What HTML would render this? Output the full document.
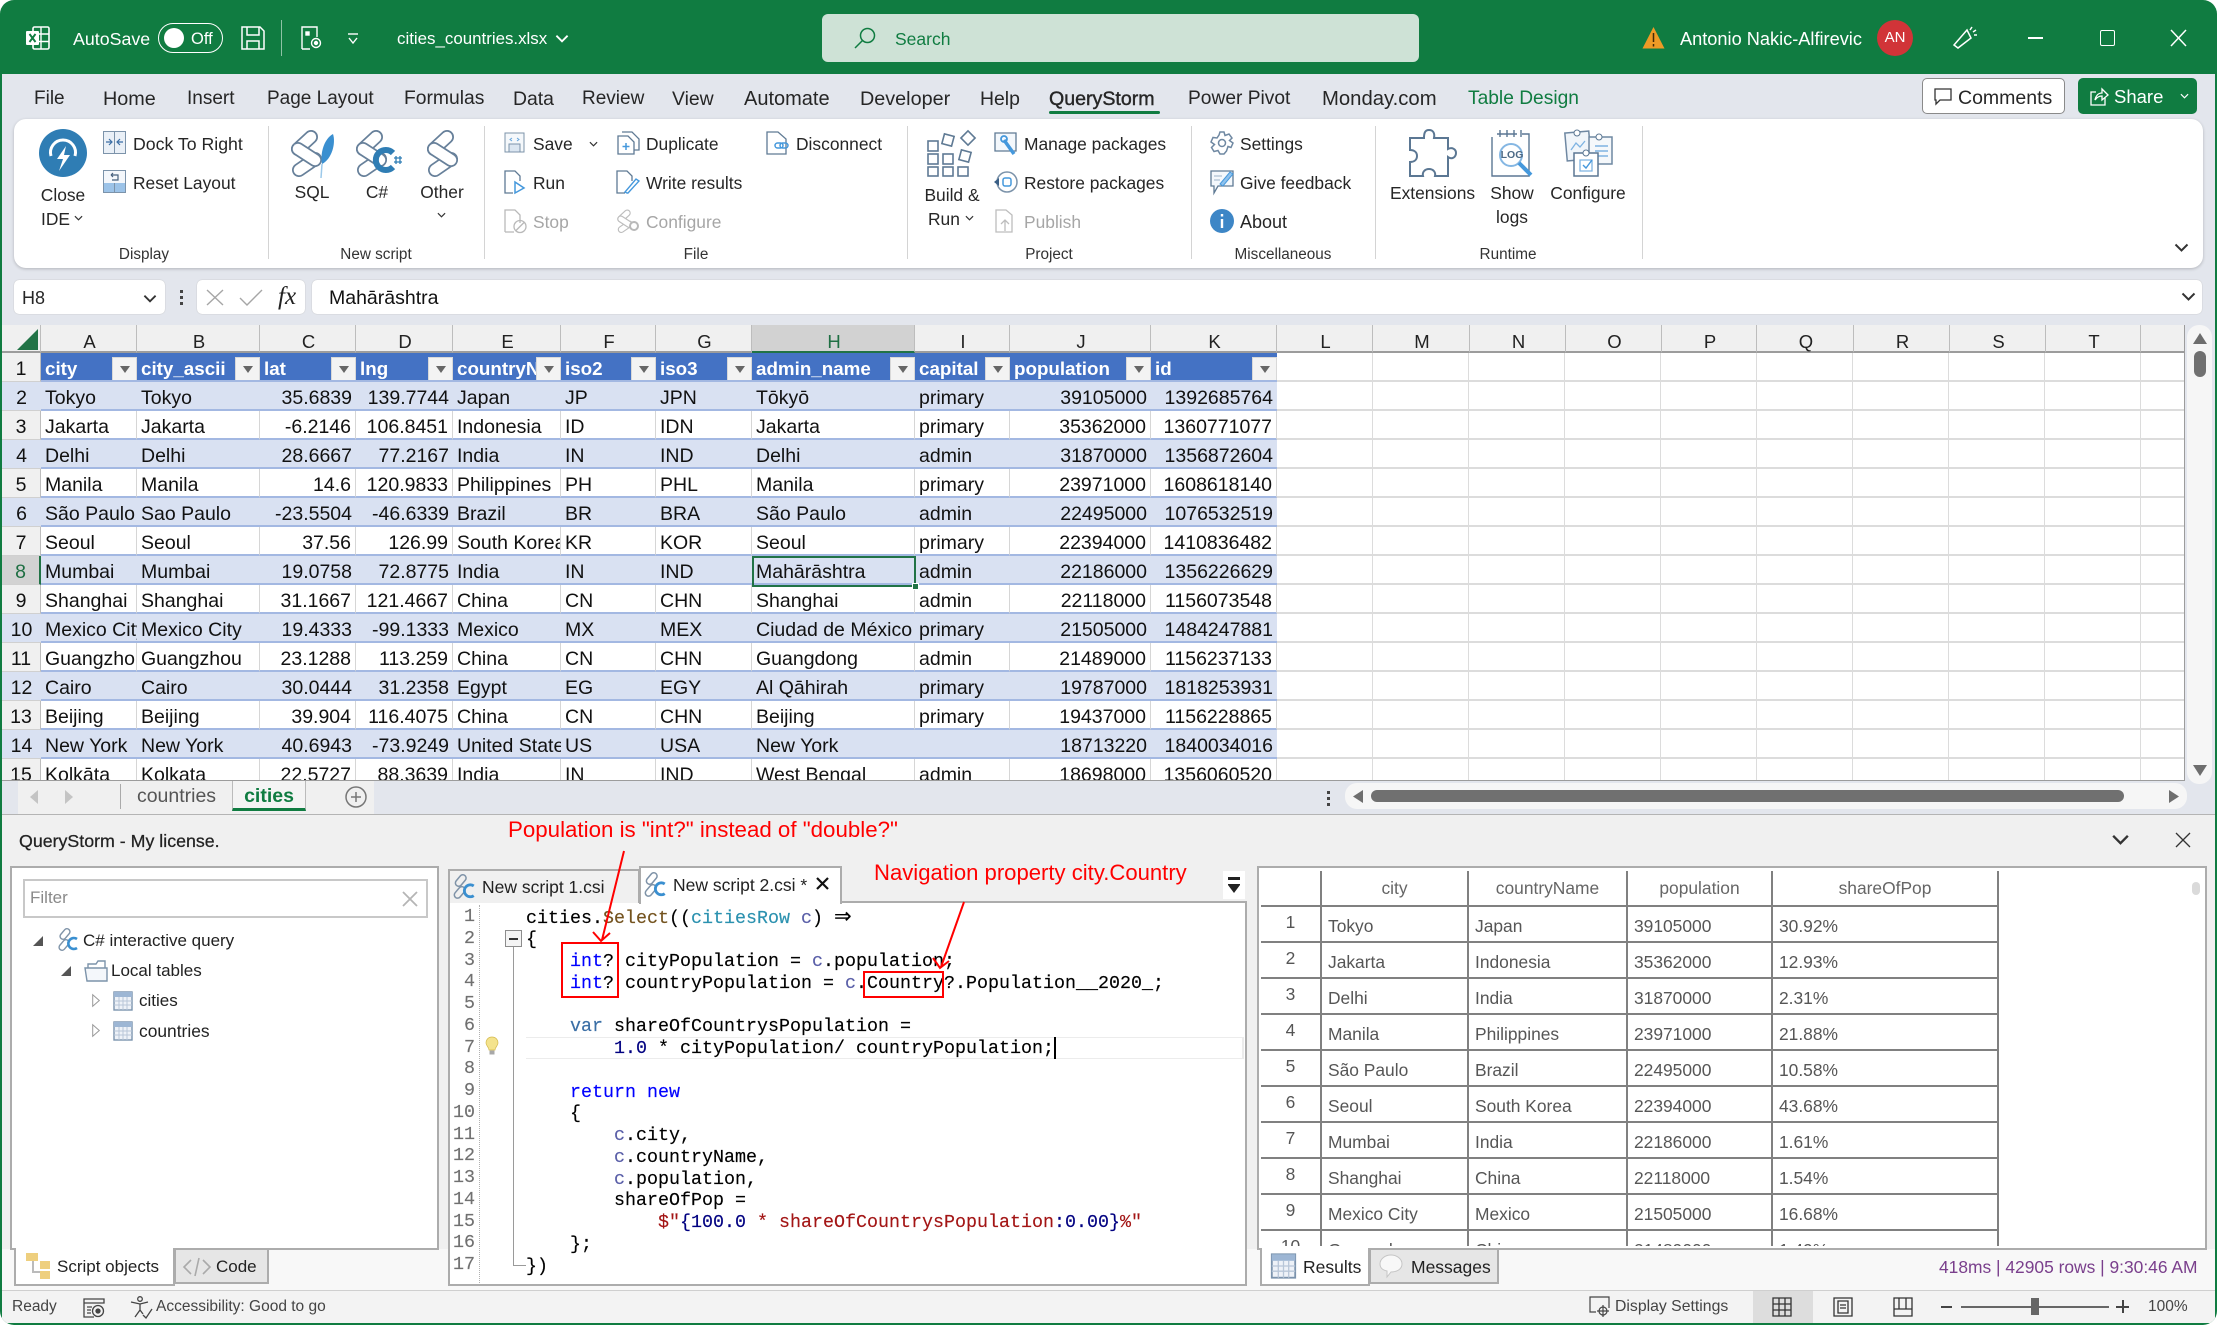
<!DOCTYPE html>
<html lang="en"><head><meta charset="utf-8"><title>cities_countries.xlsx</title>
<style>
html,body{margin:0;padding:0;background:#fff}
body{width:2217px;height:1325px;overflow:hidden;position:relative;font-family:"Liberation Sans",sans-serif;color:#262626}
*{box-sizing:border-box}
#win{position:absolute;left:0;top:0;width:2217px;height:1325px;background:#107C41;border-radius:14px;overflow:hidden}
.a{position:absolute}
.t{position:absolute;white-space:nowrap;line-height:24px;height:24px}
.w{color:#fff}
.tab{font-size:19px;top:87px}
.r{font-size:17.4px}
.d{color:#a6a6a6}
.g{position:absolute;height:24px;line-height:24px;white-space:nowrap;font-size:15.3px;top:243px;color:#333;width:160px;text-align:center}
.c{text-align:center}
.sp{position:absolute;width:1px;top:126px;height:133px;background:#d4d4d4}
svg{position:absolute;overflow:visible}
#hd{position:absolute;left:2px;top:325px;height:28px;display:flex;font-size:18.5px;color:#222}
#hd div{height:28px;line-height:33px;text-align:center;background:#f0f0f0;border-right:1px solid #bdbdbd;border-bottom:2px solid #9c9c9c;flex:none;padding-left:2px}
table{border-collapse:separate;border-spacing:0;table-layout:fixed;position:absolute}
#g td{height:29px;padding:5px 3px 0 4px;line-height:22px;font-size:19.5px;color:#111;white-space:nowrap;overflow:hidden;border-bottom:2px solid #a3b8e2;border-right:1px solid #d6d6d6;background:#fff}
#g tr.b td{background:#d9e1f2;border-right:0}
#g td.n{text-align:center;background:#f0f0f0;border-right:1px solid #bdbdbd;border-bottom:1px solid #d0d0d0;padding:5px 0 0 0;line-height:23px}
#g td.u{text-align:right;padding-right:4px}
#g tr.h td{background:#4472c4;color:#fff;font-weight:bold;font-size:18.8px;position:relative;border:0;border-bottom:2px solid #a3b8e2}
#g tr.h td.n{background:#f0f0f0;color:#111;font-weight:normal;font-size:19.5px;border-right:1px solid #bdbdbd;border-bottom:1px solid #d0d0d0}
#g i{position:absolute;right:0;top:4px;width:25px;height:24px;background:#f3f3f3;border:1px solid #d8d8d8}
#g i:after{content:"";position:absolute;left:7px;top:8px;border:5px solid transparent;border-top:7px solid #666;border-bottom:0}
#rs td{height:36px;border-bottom:2px solid #808080;border-right:2px solid #808080;padding:4px 0 0 6px;font-size:17.4px;color:#565656;white-space:nowrap;overflow:hidden;line-height:28px}
#rs td.n{text-align:center;padding:0 0 4px 0;color:#555}
#rs tr.h td{height:35px;text-align:center;padding:0;line-height:34px;color:#666}
pre{position:absolute;margin:0;font-family:"Liberation Mono",monospace;font-size:18.33px;line-height:21.75px;color:#000;-webkit-text-stroke:.15px currentColor}
.b1{color:#00f}.nv{color:#000080}.pm{color:#5a5fa8}.ty{color:#2b91af}.st{color:#a31515}.br{color:#74531f}.vr{color:#3a6ea5}
.tr{font-size:17px;color:#222}
.st2{font-size:15.5px;color:#444}
</style></head>
<body>
<svg width="0" height="0" style="position:absolute"><defs>
<symbol id="qs" viewBox="0 0 33 48"><g fill="none" stroke-linecap="round"><path d="M22 8L9 20" stroke="#67809a" stroke-width="14"/><path d="M22 8L9 20" stroke="#fff" stroke-width="10.500"/><path d="M10 41L26 30" stroke="#67809a" stroke-width="14"/><path d="M10 41L26 30" stroke="#fff" stroke-width="10.500"/><path d="M9 20L26 31" stroke="#67809a" stroke-width="14"/><path d="M9 20L26 31" stroke="#fff" stroke-width="10.500"/></g></symbol>
<symbol id="qsg" viewBox="0 0 33 48"><g fill="none" stroke-linecap="round"><path d="M22 8L9 20" stroke="#bdbdbd" stroke-width="14"/><path d="M22 8L9 20" stroke="#fff" stroke-width="9.500"/><path d="M10 41L26 30" stroke="#bdbdbd" stroke-width="14"/><path d="M10 41L26 30" stroke="#fff" stroke-width="9.500"/><path d="M9 20L26 31" stroke="#bdbdbd" stroke-width="14"/><path d="M9 20L26 31" stroke="#fff" stroke-width="9.500"/></g></symbol>
<symbol id="ch" viewBox="0 0 10 6"><path d="M1 1L5 5L9 1" fill="none" stroke="currentColor" stroke-width="1.300"/></symbol>
<symbol id="csmall" viewBox="0 0 24 24"><g fill="none" stroke="#7f93a8" stroke-width="1.400"><rect x="6" y="0" width="6" height="12" rx="3" transform="rotate(40 9 6)"/><rect x="5" y="11" width="6" height="12" rx="3" transform="rotate(40 8 17)"/></g><path d="M21 11a5.500 5.500 0 1 0 0 9" fill="none" stroke="#3a8fd0" stroke-width="2.600"/></symbol>
<symbol id="tbl" viewBox="0 0 20 20"><rect x="1" y="1" width="18" height="18" fill="#eef2f8" stroke="#7b93ad" stroke-width="1.400"/><rect x="1" y="1" width="18" height="5" fill="#9db6d4"/><path d="M1 10H19M1 14H19M6 6V19M10 6V19M14 6V19" stroke="#b8c6d8" stroke-width="1"/></symbol>
</defs></svg>
<div id="win">
<!-- title bar -->
<svg style="left:26px;top:26px" width="24" height="24" viewBox="0 0 24 24"><rect x="7" y="1" width="16" height="22" rx="1.500" fill="none" stroke="#fff" stroke-width="1.600"/><path d="M15 1V23M7 8H23M7 15.500H23" stroke="#fff" stroke-width="1.400"/><rect x="0" y="5" width="13" height="14" rx="1" fill="#fff"/><path d="M3.500 8L9.500 16M9.500 8L3.500 16" stroke="#107C41" stroke-width="1.900"/></svg>
<div class="t w" style="left:73px;top:27px;font-size:17.800px">AutoSave</div>
<div class="a" style="left:158px;top:23px;width:65px;height:30px;border:1.500px solid #fff;border-radius:15px"></div>
<div class="a" style="left:164px;top:28px;width:20px;height:20px;background:#fff;border-radius:50%"></div>
<div class="t w" style="left:191px;top:27px;font-size:16.500px">Off</div>
<svg style="left:241px;top:26px" width="24" height="24" viewBox="0 0 24 24" fill="none" stroke="#fff" stroke-width="1.500"><path d="M1 1H19L23 5V23H1Z"/><path d="M6 1V9H18V1M6 23V15H18V23"/></svg>
<div class="a" style="left:281px;top:20px;width:1px;height:36px;background:#8fc2a5"></div>
<svg style="left:301px;top:26px" width="22" height="24" viewBox="0 0 22 24" fill="none" stroke="#fff" stroke-width="1.400"><path d="M1 23V1H16V11M1 23H9"/><rect x="5" y="6" width="3" height="3" fill="#fff"/><circle cx="15" cy="17" r="4.500"/><circle cx="15" cy="17" r="1.500" fill="#fff"/></svg>
<svg style="left:347px;top:33px;color:#fff" width="12" height="12" viewBox="0 0 12 12"><path d="M1 1H11" stroke="#fff" stroke-width="1.400"/><path d="M2 5L6 10L10 5" fill="none" stroke="#fff" stroke-width="1.400"/></svg>
<div class="t w" style="left:397px;top:27px;font-size:16.900px">cities_countries.xlsx</div>
<svg style="left:555px;top:34px;color:#fff" width="14" height="9"><use href="#ch"/></svg>
<div class="a" style="left:822px;top:14px;width:597px;height:48px;background:#cee2d6;border-radius:6px"></div>
<svg style="left:854px;top:27px" width="22" height="22" viewBox="0 0 22 22" fill="none" stroke="#107C41" stroke-width="1.500"><circle cx="13.500" cy="8.500" r="7"/><path d="M8.500 13.500L1 21"/></svg>
<div class="t" style="left:895px;top:27px;font-size:17.500px;color:#107C41">Search</div>
<svg style="left:1642px;top:26px" width="23" height="23" viewBox="0 0 23 23"><path d="M11.500 1L22.500 22.500H.5Z" fill="#ee9a26"/><path d="M11.500 7V16M11.500 18V20.500" stroke="#402808" stroke-width="1.500"/></svg>
<div class="t w" style="left:1680px;top:27px;font-size:18.200px">Antonio Nakic-Alfirevic</div>
<div class="a c w" style="left:1877px;top:20px;width:36px;height:36px;border-radius:50%;background:#d13438;font-size:15px;line-height:36px">AN</div>
<svg style="left:1952px;top:26px" width="25" height="24" viewBox="0 0 25 24" fill="none" stroke="#fff" stroke-width="1.500"><path d="M15 4L19 12L6 22L2 19Z"/><path d="M18 4L20 1M21 6L24 4M22 9H25"/></svg>
<div class="a" style="left:2028px;top:37px;width:15px;height:2px;background:#fff"></div>
<div class="a" style="left:2100px;top:30px;width:15px;height:16px;border:1.500px solid #fff;border-radius:2px"></div>
<svg style="left:2171px;top:30px" width="15" height="16"><path d="M0 0L15 16M15 0L0 16" stroke="#fff" stroke-width="1.500"/></svg>

<!-- main bg -->
<div class="a" style="left:2px;top:74px;width:2213px;height:741px;background:#e3e6ed"></div>
<div class="t tab" style="left:34px">File</div><div class="t tab" style="left:103px;font-size:19.800px">Home</div><div class="t tab" style="left:187px">Insert</div><div class="t tab" style="left:267px">Page Layout</div><div class="t tab" style="left:404px;font-size:19.300px">Formulas</div><div class="t tab" style="left:513px;font-size:19.400px">Data</div><div class="t tab" style="left:582px">Review</div><div class="t tab" style="left:672px;font-size:19.400px">View</div><div class="t tab" style="left:744px;font-size:20px">Automate</div><div class="t tab" style="left:860px;font-size:19.800px">Developer</div><div class="t tab" style="left:980px;font-size:19.400px">Help</div>
<div class="t tab" style="left:1049px;font-size:19.600px;-webkit-text-stroke:.4px #262626">QueryStorm</div>
<div class="a" style="left:1049px;top:111px;width:111px;height:3px;background:#107C41;border-radius:2px"></div>
<div class="t tab" style="left:1188px;font-size:19.200px">Power Pivot</div><div class="t tab" style="left:1322px;font-size:20.300px">Monday.com</div><div class="t tab" style="left:1468px;color:#107C41;font-size:19.200px">Table Design</div>
<div class="a" style="left:1922px;top:78px;width:143px;height:36px;background:#fff;border:1px solid #8a8a8a;border-radius:5px"></div>
<svg style="left:1934px;top:88px" width="18" height="17" viewBox="0 0 18 17"><path d="M1 1H17V12H6L2 16V12H1Z" fill="none" stroke="#333" stroke-width="1.300"/></svg>
<div class="t" style="left:1958px;top:86px;font-size:19.500px">Comments</div>
<div class="a" style="left:2078px;top:78px;width:119px;height:36px;background:#107C41;border-radius:5px"></div>
<svg style="left:2090px;top:87px" width="19" height="19" viewBox="0 0 19 19" fill="none" stroke="#fff" stroke-width="1.300"><path d="M6 5H1V18H15V11"/><path d="M5 13C6 8 9 6 12 6V2L18 8L12 13V9C9 9 7 10 5 13Z"/></svg>
<div class="t w" style="left:2114px;top:85px;font-size:18.500px">Share</div>
<svg style="left:2180px;top:93px;color:#fff" width="9" height="6"><use href="#ch"/></svg>

<!-- ribbon -->
<div class="a" style="left:14px;top:119px;width:2189px;height:149px;background:#fff;border-radius:12px;box-shadow:0 1px 3px rgba(0,0,0,.22)"></div>
<svg style="left:39px;top:129px" width="48" height="48" viewBox="0 0 48 48"><ellipse cx="24" cy="24" rx="24" ry="24" fill="#2f7db4"/><path d="M12 27A12.500 12.500 0 1 1 36 27" fill="none" stroke="#fff" stroke-width="3"/><path d="M27 17L18 30H24L20 42L31 26H25Z" fill="#fff"/></svg>
<div class="t r c" style="left:23px;top:183px;width:80px">Close</div>
<div class="t r" style="left:41px;top:207px">IDE</div>
<svg style="left:74px;top:215px;color:#333" width="9" height="6"><use href="#ch"/></svg>
<svg style="left:103px;top:131px" width="23" height="23" viewBox="0 0 23 23"><rect x=".5" y=".5" width="22" height="22" fill="#eaf0f7" stroke="#7c93aa"/><path d="M11.500 1V22" stroke="#7c93aa"/><path d="M3 11H9M6 8L9 11L6 14M20 11H14M17 8L14 11L17 14" fill="none" stroke="#3b6ea5" stroke-width="1.200"/></svg>
<div class="t r" style="left:133px;top:132px;font-size:17.700px">Dock To Right</div>
<svg style="left:103px;top:170px" width="23" height="23" viewBox="0 0 23 23"><rect x=".5" y=".5" width="22" height="22" fill="#f4f7fb" stroke="#7c93aa"/><rect x="1" y="13" width="21" height="9" fill="#9cc3e8"/><path d="M11.500 13V22" stroke="#7c93aa"/><path d="M8 5H15V10H9M8 5L10 3M8 5L10 7" fill="none" stroke="#455f7c" stroke-width="1.200"/></svg>
<div class="t r" style="left:133px;top:171px">Reset Layout</div>
<div class="g" style="left:64px">Display</div>
<div class="sp" style="left:268px"></div>
<svg style="left:289px;top:129px" width="33" height="48"><use href="#qs"/></svg>
<svg style="left:316px;top:133px" width="20" height="46" viewBox="0 0 20 46"><path d="M17 1C20 10 16 26 6 31C4 20 8 6 17 1Z" fill="#3a8fd0"/><path d="M6 31L5 45" stroke="#9cc9ea" stroke-width="1.500"/></svg>
<div class="t r c" style="left:282px;top:180px;width:60px">SQL</div>
<svg style="left:354px;top:129px" width="33" height="48"><use href="#qs"/></svg>
<svg style="left:372px;top:146px" width="30" height="28" viewBox="0 0 30 28"><path d="M21 7A10 10 0 1 0 21 21" fill="none" stroke="#2f7db4" stroke-width="6"/><path d="M24 10V18M28 10V18M22 12H30M22 16H30" stroke="#2f7db4" stroke-width="1.300"/></svg>
<div class="t r c" style="left:347px;top:180px;width:60px">C#</div>
<svg style="left:425px;top:129px" width="33" height="48"><use href="#qs"/></svg>
<div class="t r c" style="left:412px;top:180px;width:60px">Other</div>
<svg style="left:437px;top:212px;color:#333" width="9" height="6"><use href="#ch"/></svg>
<div class="g" style="left:296px">New script</div>
<div class="sp" style="left:484px"></div>
<svg style="left:504px;top:132px" width="21" height="21" viewBox="0 0 21 21"><path d="M1 1H20V20H1Z" fill="#f5f8fb" stroke="#7c93aa"/><path d="M5 12H16V20H5Z" fill="#dbe6f1" stroke="#7c93aa"/><path d="M8 6L6 7.500L8 9M13 6L15 7.500L13 9" fill="none" stroke="#67a6dc"/></svg>
<div class="t r" style="left:533px;top:132px">Save</div>
<svg style="left:589px;top:141px;color:#333" width="9" height="6"><use href="#ch"/></svg>
<svg style="left:504px;top:170px" width="21" height="24" viewBox="0 0 21 24" fill="none"><path d="M9 23H1V1H11L16 6V11" stroke="#5f7a94" stroke-width="1.300"/><path d="M11 12L20 18L11 23Z" stroke="#4598dc" stroke-width="1.500" fill="#fff"/></svg>
<div class="t r" style="left:533px;top:171px">Run</div>
<svg style="left:504px;top:209px" width="23" height="24" viewBox="0 0 23 24" fill="none" stroke="#b9b9b9" stroke-width="1.300"><path d="M1 23V1H11L16 6V14"/><path d="M1 23H10"/><circle cx="16" cy="17.500" r="6"/><path d="M12 21.500L20 13.500"/></svg>
<div class="t r d" style="left:533px;top:210px">Stop</div>
<svg style="left:617px;top:131px" width="23" height="24" viewBox="0 0 23 24" fill="none" stroke="#5f7a94" stroke-width="1.300"><path d="M5 1H15L22 8V19H17"/><path d="M1 5H11L17 11V23H1Z" fill="#fff"/><path d="M9 12V19M5.500 15.500H12.500" stroke="#4598dc" stroke-width="1.500"/></svg>
<div class="t r" style="left:646px;top:132px">Duplicate</div>
<svg style="left:616px;top:170px" width="24" height="24" viewBox="0 0 24 24" fill="none"><path d="M9 23H1V1H11L16 6V11" stroke="#5f7a94" stroke-width="1.300"/><path d="M11 23L9 22L20 9L23 11L12 23Z" stroke="#4598dc" stroke-width="1.400"/></svg>
<div class="t r" style="left:646px;top:171px">Write results</div>
<svg style="left:616px;top:209px" width="17" height="24"><use href="#qsg"/></svg>
<svg style="left:628px;top:220px" width="12" height="12"><circle cx="6" cy="6" r="4" fill="#fff" stroke="#b9b9b9" stroke-width="2"/></svg>
<div class="t r d" style="left:646px;top:210px">Configure</div>
<div class="g" style="left:616px">File</div>
<svg style="left:766px;top:131px" width="23" height="24" viewBox="0 0 23 24" fill="none"><path d="M1 23V1H12L20 8V23Z" stroke="#5f7a94" stroke-width="1.300"/><rect x="9" y="12" width="8" height="5" rx="2.500" stroke="#4598dc" stroke-width="1.500"/><rect x="14" y="12" width="8" height="5" rx="2.500" stroke="#4598dc" stroke-width="1.500"/></svg>
<div class="t r" style="left:796px;top:132px">Disconnect</div>
<div class="sp" style="left:907px"></div>
<svg style="left:927px;top:130px" width="49" height="47" viewBox="0 0 49 47" fill="none" stroke="#5f7a94" stroke-width="1.600"><rect x="1" y="11" width="10" height="10"/><rect x="16" y="5" width="10" height="10" transform="rotate(15 21 10)"/><rect x="36" y="3" width="10" height="10" transform="rotate(45 41 8)"/><rect x="1" y="24" width="10" height="10"/><rect x="16" y="24" width="10" height="10"/><rect x="33" y="21" width="10" height="10" transform="rotate(15 38 26)"/><rect x="1" y="37" width="10" height="9"/><rect x="16" y="37" width="10" height="9"/><rect x="31" y="37" width="10" height="9"/></svg>
<div class="t r c" style="left:912px;top:183px;width:80px">Build &amp;</div>
<div class="t r" style="left:928px;top:207px">Run</div>
<svg style="left:965px;top:215px;color:#333" width="9" height="6"><use href="#ch"/></svg>
<svg style="left:994px;top:132px" width="24" height="24" viewBox="0 0 24 24" fill="none"><path d="M1 1H22V19H1Z" stroke="#5f7a94" stroke-width="1.300" fill="#f4f8fc"/><path d="M10 8L20 22" stroke="#4598dc" stroke-width="3.500"/><circle cx="10" cy="7" r="3" stroke="#4598dc" stroke-width="1.800"/></svg>
<div class="t r" style="left:1024px;top:132px">Manage packages</div>
<svg style="left:994px;top:170px" width="24" height="24" viewBox="0 0 24 24" fill="none"><circle cx="13" cy="12" r="10" stroke="#7c93aa" stroke-width="1.500"/><rect x="9" y="8" width="8" height="8" rx="2" stroke="#4598dc" stroke-width="1.500"/><path d="M0 12L5 8V16Z" fill="#3a5f86"/></svg>
<div class="t r" style="left:1024px;top:171px">Restore packages</div>
<svg style="left:995px;top:209px" width="22" height="24" viewBox="0 0 22 24" fill="none" stroke="#bdbdbd" stroke-width="1.300"><path d="M1 23V1H11L17 6V23Z"/><path d="M10 22V11M6 15L10 11L14 15"/></svg>
<div class="t r d" style="left:1024px;top:210px">Publish</div>
<div class="g" style="left:969px">Project</div>
<div class="sp" style="left:1191px"></div>
<svg style="left:1210px;top:131px" width="24" height="24" viewBox="0 0 24 24" fill="none" stroke="#6f88a2" stroke-width="1.500"><path d="M10 1H14L15 4.500L19 3L22 7L19.500 9.500L23 12L21 16.500L18 15.500L16.500 20L14 23H10L8 19.500L4 20.500L1.500 16.500L4.500 13.500L1 11L3 6.500L7 7L9 4Z"/><circle cx="12" cy="12" r="3.500"/></svg>
<div class="t r" style="left:1240px;top:132px">Settings</div>
<svg style="left:1210px;top:170px" width="24" height="24" viewBox="0 0 24 24" fill="none"><path d="M1 1H23V16H8L4 23V16H1Z" stroke="#5f7a94" stroke-width="1.300" fill="#f4f8fc"/><path d="M10 14L20 2L23 4L13 16Z" fill="#8ec2ee" stroke="#4598dc"/><path d="M4 6H12M4 10H10" stroke="#9cb2c8"/></svg>
<div class="t r" style="left:1240px;top:171px">Give feedback</div>
<svg style="left:1210px;top:209px" width="24" height="24" viewBox="0 0 24 24"><circle cx="12" cy="12" r="12" fill="#3d86c6"/><path d="M12 5V7.500M12 10V19" stroke="#fff" stroke-width="2.400"/></svg>
<div class="t r" style="left:1240px;top:210px;font-size:18px">About</div>
<div class="g" style="left:1203px">Miscellaneous</div>
<div class="sp" style="left:1375px"></div>
<svg style="left:1409px;top:129px" width="48" height="48" viewBox="0 0 48 48" fill="none" stroke="#5b7793" stroke-width="2"><path d="M1 9H15C15 4 16 1 20 1S26 4 25 9H39V20C43 18 47 20 47 24S43 31 39 28V47H26C27 43 24 40 20 40S13 43 14 47H1V33C5 33 8 31 8 27S5 21 1 21Z"/></svg>
<div class="t r c" style="left:1390px;top:181px;width:80px">Extensions</div>
<svg style="left:1491px;top:129px" width="42" height="48" viewBox="0 0 42 48" fill="none"><path d="M1 8V47H38V5H31M6 5H26" stroke="#5b7793" stroke-width="1.400"/><path d="M9 1V8M16 1V8M23 1V8M30 1V8" stroke="#5b7793" stroke-width="1.400"/><circle cx="20" cy="26" r="11" stroke="#85b7e3" stroke-width="2"/><path d="M28 34L40 46" stroke="#4598dc" stroke-width="4"/></svg>
<div class="t c" style="left:1493px;top:143px;width:38px;font-size:10.500px;font-weight:bold;color:#4d6a86">LOG</div>
<div class="t r c" style="left:1472px;top:181px;width:80px">Show</div>
<div class="t r c" style="left:1472px;top:205px;width:80px">logs</div>
<svg style="left:1565px;top:129px" width="48" height="48" viewBox="0 0 48 48" fill="none"><rect x="1" y="3" width="24" height="28" fill="#f0f5fa" stroke="#6f88a2" stroke-width="1.500" transform="rotate(-5 13 17)"/><rect x="24" y="8" width="23" height="27" fill="#f5f8fb" stroke="#6f88a2" stroke-width="1.500"/><path d="M30 17H43M30 22H43M30 27H43" stroke="#7eb3e2" stroke-width="1.500"/><path d="M6 21L11 14L15 18L20 12" stroke="#7eb3e2" stroke-width="1.300"/><rect x="9" y="24" width="24" height="23" fill="#fff" stroke="#5b7793" stroke-width="1.500"/><path d="M15 31H27V42H15Z" stroke="#7eb3e2" stroke-width="1.300"/><path d="M18 36L21 39L27 31" stroke="#4598dc" stroke-width="1.400"/><circle cx="12" cy="4" r="3" fill="#fff" stroke="#5b7793"/><circle cx="34" cy="8" r="3" fill="#fff" stroke="#5b7793"/><circle cx="21" cy="24" r="3" fill="#fff" stroke="#5b7793"/></svg>
<div class="t r c" style="left:1548px;top:181px;width:80px">Configure</div>
<div class="g" style="left:1428px">Runtime</div>
<div class="sp" style="left:1642px"></div>
<svg style="left:2174px;top:243px;color:#333" width="15" height="9"><use href="#ch"/></svg>

<!-- formula bar -->
<div class="a" style="left:14px;top:280px;width:151px;height:34px;background:#fff;border-radius:5px;box-shadow:0 0 1px #aaa"></div>
<div class="t" style="left:22px;top:286px;font-size:18px">H8</div>
<svg style="left:143px;top:294px;color:#333" width="14" height="9"><use href="#ch"/></svg>
<div class="a" style="left:180px;top:290px;width:3px;height:3px;background:#444;box-shadow:0 6px 0 #444,0 12px 0 #444"></div>
<div class="a" style="left:197px;top:280px;width:108px;height:34px;background:#fff;border-radius:5px;box-shadow:0 0 1px #aaa"></div>
<svg style="left:206px;top:289px" width="18" height="17"><path d="M1 1L17 16M17 1L1 16" stroke="#a6a6a6" stroke-width="1.400"/></svg>
<svg style="left:239px;top:289px" width="24" height="17"><path d="M1 9L8 16L23 1" fill="none" stroke="#a6a6a6" stroke-width="1.400"/></svg>
<div class="t" style="left:278px;top:285px;font-family:'Liberation Serif',serif;font-style:italic;font-size:25px;color:#222">fx</div>
<div class="a" style="left:312px;top:280px;width:1890px;height:34px;background:#fff;border-radius:5px;box-shadow:0 0 1px #aaa"></div>
<div class="t" style="left:329px;top:286px;font-size:19.500px;color:#111">Mahārāshtra</div>
<svg style="left:2181px;top:292px;color:#333" width="15" height="9"><use href="#ch"/></svg>

<!-- column headers -->
<div id="hd"><div style="width:39px"></div><div style="width:96px">A</div><div style="width:123px">B</div><div style="width:96px">C</div><div style="width:97px">D</div><div style="width:108px">E</div><div style="width:95px">F</div><div style="width:96px">G</div><div style="width:163px;background:#d2d2d2;color:#1f6f43;border-bottom:2px solid #217346">H</div><div style="width:95px">I</div><div style="width:141px">J</div><div style="width:126px">K</div><div style="width:96px">L</div><div style="width:97px">M</div><div style="width:96px">N</div><div style="width:96px">O</div><div style="width:95px">P</div><div style="width:97px">Q</div><div style="width:96px">R</div><div style="width:96px">S</div><div style="width:95px">T</div><div style="width:44px;border-right:1px solid #9c9c9c"></div></div>
<svg style="left:17px;top:329px" width="22" height="22"><path d="M21 0V21H0Z" fill="#217346"/></svg>

<!-- grid -->
<div class="a" style="left:2px;top:353px;width:2183px;height:428px;background:#fff;overflow:hidden;border-bottom:1px solid #9c9c9c;border-right:1px solid #9c9c9c">
<div class="a" style="left:1275px;top:0;width:908px;height:428px;background-image:linear-gradient(to left,#dcdcdc 1px,transparent 1px),linear-gradient(to top,#dcdcdc 2px,transparent 2px);background-size:96px 100%,100% 29px"></div>
</div>
<div class="a" style="left:2px;top:353px;width:1275px;height:427px;overflow:hidden">
<table id="g" style="left:0;top:0;width:1275px"><colgroup><col style="width:39px"><col style="width:96px"><col style="width:123px"><col style="width:96px"><col style="width:97px"><col style="width:108px"><col style="width:95px"><col style="width:96px"><col style="width:163px"><col style="width:95px"><col style="width:141px"><col style="width:126px"></colgroup>
<tr class="h"><td class="n">1</td><td>city<i></i></td><td>city_ascii<i></i></td><td>lat<i></i></td><td>lng<i></i></td><td>countryN<i></i></td><td>iso2<i></i></td><td>iso3<i></i></td><td>admin_name<i></i></td><td>capital<i></i></td><td>population<i></i></td><td>id<i></i></td></tr>
<tr class="b"><td class="n">2</td><td>Tokyo</td><td>Tokyo</td><td class="u">35.6839</td><td class="u">139.7744</td><td>Japan</td><td>JP</td><td>JPN</td><td>Tōkyō</td><td>primary</td><td class="u">39105000</td><td class="u">1392685764</td></tr>
<tr><td class="n">3</td><td>Jakarta</td><td>Jakarta</td><td class="u">-6.2146</td><td class="u">106.8451</td><td>Indonesia</td><td>ID</td><td>IDN</td><td>Jakarta</td><td>primary</td><td class="u">35362000</td><td class="u">1360771077</td></tr>
<tr class="b"><td class="n">4</td><td>Delhi</td><td>Delhi</td><td class="u">28.6667</td><td class="u">77.2167</td><td>India</td><td>IN</td><td>IND</td><td>Delhi</td><td>admin</td><td class="u">31870000</td><td class="u">1356872604</td></tr>
<tr><td class="n">5</td><td>Manila</td><td>Manila</td><td class="u">14.6</td><td class="u">120.9833</td><td>Philippines</td><td>PH</td><td>PHL</td><td>Manila</td><td>primary</td><td class="u">23971000</td><td class="u">1608618140</td></tr>
<tr class="b"><td class="n">6</td><td>São Paulo</td><td>Sao Paulo</td><td class="u">-23.5504</td><td class="u">-46.6339</td><td>Brazil</td><td>BR</td><td>BRA</td><td>São Paulo</td><td>admin</td><td class="u">22495000</td><td class="u">1076532519</td></tr>
<tr><td class="n">7</td><td>Seoul</td><td>Seoul</td><td class="u">37.56</td><td class="u">126.99</td><td>South Korea</td><td>KR</td><td>KOR</td><td>Seoul</td><td>primary</td><td class="u">22394000</td><td class="u">1410836482</td></tr>
<tr class="b"><td class="n" style="background:#d2d2d2;color:#1f6f43;border-right:2px solid #217346">8</td><td>Mumbai</td><td>Mumbai</td><td class="u">19.0758</td><td class="u">72.8775</td><td>India</td><td>IN</td><td>IND</td><td>Mahārāshtra</td><td>admin</td><td class="u">22186000</td><td class="u">1356226629</td></tr>
<tr><td class="n">9</td><td>Shanghai</td><td>Shanghai</td><td class="u">31.1667</td><td class="u">121.4667</td><td>China</td><td>CN</td><td>CHN</td><td>Shanghai</td><td>admin</td><td class="u">22118000</td><td class="u">1156073548</td></tr>
<tr class="b"><td class="n">10</td><td>Mexico City</td><td>Mexico City</td><td class="u">19.4333</td><td class="u">-99.1333</td><td>Mexico</td><td>MX</td><td>MEX</td><td>Ciudad de México</td><td>primary</td><td class="u">21505000</td><td class="u">1484247881</td></tr>
<tr><td class="n">11</td><td>Guangzhou</td><td>Guangzhou</td><td class="u">23.1288</td><td class="u">113.259</td><td>China</td><td>CN</td><td>CHN</td><td>Guangdong</td><td>admin</td><td class="u">21489000</td><td class="u">1156237133</td></tr>
<tr class="b"><td class="n">12</td><td>Cairo</td><td>Cairo</td><td class="u">30.0444</td><td class="u">31.2358</td><td>Egypt</td><td>EG</td><td>EGY</td><td>Al Qāhirah</td><td>primary</td><td class="u">19787000</td><td class="u">1818253931</td></tr>
<tr><td class="n">13</td><td>Beijing</td><td>Beijing</td><td class="u">39.904</td><td class="u">116.4075</td><td>China</td><td>CN</td><td>CHN</td><td>Beijing</td><td>primary</td><td class="u">19437000</td><td class="u">1156228865</td></tr>
<tr class="b"><td class="n">14</td><td>New York</td><td>New York</td><td class="u">40.6943</td><td class="u">-73.9249</td><td>United States</td><td>US</td><td>USA</td><td>New York</td><td></td><td class="u">18713220</td><td class="u">1840034016</td></tr>
<tr><td class="n">15</td><td>Kolkāta</td><td>Kolkata</td><td class="u">22.5727</td><td class="u">88.3639</td><td>India</td><td>IN</td><td>IND</td><td>West Bengal</td><td>admin</td><td class="u">18698000</td><td class="u">1356060520</td></tr>
</table></div>
<div class="a" style="left:752px;top:556px;width:164px;height:31px;border:2px solid #217346"></div>
<div class="a" style="left:912px;top:583px;width:7px;height:7px;background:#217346;border:1px solid #fff"></div>
<div class="a" style="left:2px;top:780px;width:1275px;height:1px;background:#9c9c9c"></div>

<!-- vertical scroll -->
<div class="a" style="left:2187px;top:325px;width:25px;height:459px;background:#f6f6f6;border-radius:12px"></div>
<svg style="left:2193px;top:333px" width="14" height="11"><path d="M7 0L14 11H0Z" fill="#6e6e6e"/></svg>
<div class="a" style="left:2194px;top:351px;width:12px;height:26px;background:#707070;border-radius:6px"></div>
<svg style="left:2193px;top:765px" width="14" height="11"><path d="M7 11L14 0H0Z" fill="#6e6e6e"/></svg>

<!-- sheet tabs -->
<div class="a" style="left:18px;top:781px;width:356px;height:33px;background:#f0f0f0"></div>
<svg style="left:30px;top:790px" width="8" height="14"><path d="M8 0V14L0 7Z" fill="#c4c4c4"/></svg>
<svg style="left:65px;top:790px" width="8" height="14"><path d="M0 0V14L8 7Z" fill="#c4c4c4"/></svg>
<div class="a" style="left:120px;top:784px;width:1px;height:25px;background:#aaa"></div>
<div class="t c" style="left:121px;top:784px;width:111px;font-size:19.500px;color:#555">countries</div>
<div class="a" style="left:232px;top:781px;width:74px;height:30px;background:#f4f4f4;border-bottom:3px solid #107C41;border-left:1px solid #bbb;border-right:1px solid #bbb"></div>
<div class="t c" style="left:232px;top:784px;width:74px;font-size:19.500px;font-weight:bold;color:#107C41">cities</div>
<svg style="left:345px;top:786px" width="22" height="22" viewBox="0 0 22 22" fill="none" stroke="#777" stroke-width="1.500"><circle cx="11" cy="11" r="10"/><path d="M11 6V16M6 11H16"/></svg>
<div class="a" style="left:1327px;top:791px;width:3px;height:3px;background:#444;box-shadow:0 6px 0 #444,0 12px 0 #444"></div>
<div class="a" style="left:1345px;top:783px;width:842px;height:26px;background:#f6f6f6;border-radius:12px"></div>
<svg style="left:1353px;top:790px" width="10" height="13"><path d="M10 0V13L0 6.500Z" fill="#6e6e6e"/></svg>
<div class="a" style="left:1371px;top:790px;width:753px;height:12px;background:#707070;border-radius:6px"></div>
<svg style="left:2169px;top:790px" width="10" height="13"><path d="M0 0V13L10 6.500Z" fill="#6e6e6e"/></svg>

<!-- bottom panel -->
<div class="a" style="left:2px;top:814px;width:2213px;height:476px;background:#f0f0f0;border-top:1px solid #b4b4b4"></div>
<div class="a" style="left:2px;top:1249px;width:2213px;height:41px;background:#f8f8f8"></div>
<div class="t" style="left:19px;top:829px;font-size:17.800px;color:#222;-webkit-text-stroke:.25px #222">QueryStorm - My license.</div>
<svg style="left:2111px;top:834px;color:#333" width="19" height="11"><use href="#ch"/></svg>
<svg style="left:2176px;top:833px" width="14" height="14"><path d="M0 0L14 14M14 0L0 14" stroke="#333" stroke-width="1.300"/></svg>

<!-- left panel -->
<div class="a" style="left:10px;top:866px;width:429px;height:384px;background:#fff;border:2px solid #acacac"></div>
<div class="a" style="left:23px;top:879px;width:405px;height:39px;border:2px solid #c8c8c8;background:#fff"></div>
<div class="t" style="left:30px;top:886px;font-size:17px;color:#8a8a8a">Filter</div>
<svg style="left:403px;top:892px" width="14" height="14"><path d="M0 0L14 14M14 0L0 14" stroke="#b5b5b5" stroke-width="1.800"/></svg>
<svg style="left:33px;top:936px" width="10" height="10"><path d="M10 0V10H0Z" fill="#555"/></svg>
<svg style="left:56px;top:928px" width="24" height="24"><use href="#csmall"/></svg>
<div class="t tr" style="left:83px;top:929px">C# interactive query</div>
<svg style="left:61px;top:966px" width="10" height="10"><path d="M10 0V10H0Z" fill="#555"/></svg>
<svg style="left:84px;top:960px" width="24" height="22" viewBox="0 0 24 22" fill="none" stroke="#7c93aa" stroke-width="1.400"><path d="M1 8H23V21H3Z" fill="#f4f7fb"/><path d="M4 8V4H12L14 1H21V8"/></svg>
<div class="t tr" style="left:111px;top:959px">Local tables</div>
<svg style="left:92px;top:994px" width="8" height="13"><path d="M.7.7V12.300L7.300 6.500Z" fill="none" stroke="#9a9a9a"/></svg>
<svg style="left:113px;top:991px" width="20" height="20"><use href="#tbl"/></svg>
<div class="t tr" style="left:139px;top:989px">cities</div>
<svg style="left:92px;top:1024px" width="8" height="13"><path d="M.7.7V12.300L7.300 6.500Z" fill="none" stroke="#9a9a9a"/></svg>
<svg style="left:113px;top:1021px" width="20" height="20"><use href="#tbl"/></svg>
<div class="t tr" style="left:139px;top:1019px;font-size:17.400px">countries</div>
<div class="a" style="left:174px;top:1250px;width:95px;height:34px;background:#e6e6e6;border:2px solid #acacac;border-top:0"></div>
<div class="a" style="left:14px;top:1248px;width:161px;height:38px;background:#fff;border:2px solid #acacac;border-top:0"></div>
<svg style="left:25px;top:1252px" width="26" height="28" viewBox="0 0 26 28"><path d="M8 8V20H16" fill="none" stroke="#bbb" stroke-width="2"/><rect x="1" y="1" width="12" height="8" fill="#eecf7e"/><rect x="15" y="9" width="10" height="8" fill="#eecf7e"/><rect x="15" y="19" width="10" height="8" fill="#eecf7e"/></svg>
<div class="t tr" style="left:57px;top:1255px">Script objects</div>
<svg style="left:183px;top:1257px" width="28" height="20" viewBox="0 0 28 20" fill="none" stroke="#aaa" stroke-width="1.600"><path d="M8 3L1 10L8 17M20 3L27 10L20 17M16 1L12 19"/></svg>
<div class="t tr" style="left:216px;top:1255px">Code</div>

<!-- editor -->
<div class="a" style="left:448px;top:901px;width:799px;height:385px;background:#fff;border:2px solid #acacac"></div>
<div class="a" style="left:448px;top:869px;width:192px;height:34px;background:#f0f0f0;border:2px solid #acacac;border-bottom:0"></div>
<div class="a" style="left:639px;top:866px;width:203px;height:38px;background:#fff;border:2px solid #acacac;border-bottom:0"></div>
<svg style="left:451px;top:874px" width="26" height="26"><use href="#csmall"/></svg>
<div class="t" style="left:482px;top:875px;font-size:17.500px;color:#222">New script 1.csi</div>
<svg style="left:642px;top:872px" width="26" height="26"><use href="#csmall"/></svg>
<div class="t" style="left:673px;top:873px;font-size:17.500px;color:#222">New script 2.csi *</div>
<svg style="left:816px;top:877px" width="13" height="13"><path d="M1 1L12 12M12 1L1 12" stroke="#111" stroke-width="2.200"/></svg>
<div class="a" style="left:1223px;top:871px;width:22px;height:28px;background:#fff"></div>
<div class="a" style="left:1228px;top:877px;width:12px;height:3px;background:#222"></div>
<svg style="left:1228px;top:884px" width="12" height="10"><path d="M0 0H12V1L6 9L0 1Z" fill="#222"/></svg>
<div class="a" style="left:526px;top:1037px;width:718px;height:22px;border:1px solid #ececec;border-left:0;border-right:2px solid #ececec"></div>
<div class="a" style="left:479px;top:905px;height:378px;border-left:1px dotted #b0b0b0"></div>
<pre style="left:440px;top:906px;width:35px;text-align:right;color:#707070">1
2
3
4
5
6
7
8
9
10
11
12
13
14
15
16
17</pre>
<pre style="left:526px;top:906.500px">cities.<span class="br">Select</span>((<span class="ty">citiesRow</span> <span class="pm">c</span>) <span style="display:inline-block;width:22px;font-family:'DejaVu Sans',sans-serif;font-size:21px;line-height:18px">⇒</span>
{
    <span class="b1">int</span>? cityPopulation = <span class="pm">c</span>.population;
    <span class="b1">int</span>? countryPopulation = <span class="pm">c</span>.Country?.Population__2020_;

    <span class="vr">var</span> shareOfCountrysPopulation =
        <span class="nv">1.0</span> * cityPopulation/ countryPopulation;

    <span class="b1">return new</span>
    {
        <span class="pm">c</span>.city,
        <span class="pm">c</span>.countryName,
        <span class="pm">c</span>.population,
        shareOfPop =
            <span class="st">$"</span><span class="nv">{100.0</span> <span class="st">* shareOfCountrysPopulation</span><span class="nv">:0.00}</span><span class="st">%"</span>
    };
})</pre>
<div class="a" style="left:505px;top:930px;width:17px;height:17px;border:1px solid #8c8c8c;background:#f4f4f4"></div>
<div class="a" style="left:509px;top:938px;width:9px;height:1.500px;background:#333"></div>
<div class="a" style="left:513px;top:947px;width:1px;height:318px;background:#9a9a9a"></div>
<div class="a" style="left:513px;top:1265px;width:13px;height:1px;background:#9a9a9a"></div>
<div class="a" style="left:1054px;top:1037px;width:2px;height:22px;background:#000"></div>
<svg style="left:486px;top:1037px" width="12" height="18" viewBox="0 0 12 18"><path d="M6 0C10 0 12 3 12 6C12 9 9 10 9 13H3C3 10 0 9 0 6C0 3 2 0 6 0Z" fill="#f4e38d" stroke="#d4b94d" stroke-width=".7"/><rect x="3.500" y="13.500" width="5" height="4" fill="#a8a8a8"/></svg>

<!-- results -->
<div class="a" style="left:1257px;top:866px;width:950px;height:384px;background:#fff;border:2px solid #acacac"></div>
<div class="a" style="left:1261px;top:871px;width:738px;height:375px;overflow:hidden">
<table id="rs" style="left:0;top:0;width:738px"><colgroup><col style="width:61px"><col style="width:147px"><col style="width:159px"><col style="width:145px"><col style="width:226px"></colgroup>
<tr class="h"><td></td><td>city</td><td>countryName</td><td>population</td><td>shareOfPop</td></tr>
<tr><td class="n">1</td><td>Tokyo</td><td>Japan</td><td>39105000</td><td>30.92%</td></tr>
<tr><td class="n">2</td><td>Jakarta</td><td>Indonesia</td><td>35362000</td><td>12.93%</td></tr>
<tr><td class="n">3</td><td>Delhi</td><td>India</td><td>31870000</td><td>2.31%</td></tr>
<tr><td class="n">4</td><td>Manila</td><td>Philippines</td><td>23971000</td><td>21.88%</td></tr>
<tr><td class="n">5</td><td>São Paulo</td><td>Brazil</td><td>22495000</td><td>10.58%</td></tr>
<tr><td class="n">6</td><td>Seoul</td><td>South Korea</td><td>22394000</td><td>43.68%</td></tr>
<tr><td class="n">7</td><td>Mumbai</td><td>India</td><td>22186000</td><td>1.61%</td></tr>
<tr><td class="n">8</td><td>Shanghai</td><td>China</td><td>22118000</td><td>1.54%</td></tr>
<tr><td class="n">9</td><td>Mexico City</td><td>Mexico</td><td>21505000</td><td>16.68%</td></tr>
<tr><td class="n">10</td><td>Guangzhou</td><td>China</td><td>21489000</td><td>1.49%</td></tr>
</table></div>
<div class="a" style="left:2192px;top:882px;width:8px;height:13px;background:#dadada;border-radius:4px"></div>
<div class="a" style="left:1369px;top:1250px;width:130px;height:34px;background:#e6e6e6;border:2px solid #acacac;border-top:0"></div>
<div class="a" style="left:1260px;top:1248px;width:110px;height:38px;background:#fff;border:2px solid #acacac;border-top:0"></div>
<svg style="left:1270px;top:1253px" width="27" height="26"><use href="#tbl"/></svg>
<div class="t" style="left:1303px;top:1255px;font-size:17.500px;color:#222">Results</div>
<svg style="left:1379px;top:1254px" width="24" height="24" viewBox="0 0 24 24"><path d="M12 1C18 1 23 5 23 10C23 15 18 18 12 18L8 23V17C3 16 1 13 1 10C1 5 6 1 12 1Z" fill="#f8f8f8" stroke="#c5c5c5"/></svg>
<div class="t" style="left:1411px;top:1255px;font-size:17.500px;color:#222">Messages</div>
<div class="t" style="left:1939px;top:1255px;font-size:17.400px;color:#7a3f8c">418ms | 42905 rows | 9:30:46 AM</div>

<!-- annotations -->
<div class="t" style="left:508px;top:818px;font-size:22.300px;color:#f00">Population is "int?" instead of "double?"</div>
<div class="t" style="left:874px;top:861px;font-size:22.100px;color:#f00">Navigation property city.Country</div>
<svg style="left:0;top:0" width="2217" height="1325" fill="none" stroke="#f00" stroke-width="2"><rect x="562" y="943" width="56" height="54"/><rect x="864" y="972" width="79" height="25"/><path d="M624 851L602 940M593 932L601 941L610 933"/><path d="M964 902L941 967M933 958L940 968L949 961"/></svg>

<!-- status -->
<div class="a" style="left:2px;top:1290px;width:2213px;height:33px;background:#f3f3f3;border-top:1px solid #cfcfcf"></div>
<div class="t st2" style="left:12px;top:1295px">Ready</div>
<svg style="left:83px;top:1298px" width="22" height="20" viewBox="0 0 22 20" fill="none" stroke="#444" stroke-width="1.300"><path d="M1 1H21V5H1ZM1 5V19H11"/><circle cx="15" cy="13" r="5.500"/><circle cx="15" cy="13" r="2" fill="#444"/><path d="M4 9H9M4 12H8M4 15H8"/></svg>
<svg style="left:130px;top:1296px" width="23" height="24" viewBox="0 0 23 24" fill="none" stroke="#444" stroke-width="1.300"><circle cx="10" cy="3" r="2.300"/><path d="M1 6L10 8L18 6M10 8V14L5 21M10 14L13 18M13 19L16 22L22 13"/></svg>
<div class="t st2" style="left:156px;top:1295px">Accessibility: Good to go</div>
<svg style="left:1589px;top:1296px" width="22" height="22" viewBox="0 0 22 22" fill="none" stroke="#444" stroke-width="1.200"><path d="M7 16H1V1H20V12"/><circle cx="14" cy="15" r="4"/><path d="M14 9V21M8 15H20"/></svg>
<div class="t st2" style="left:1615px;top:1295px;font-size:15.800px">Display Settings</div>
<div class="a" style="left:1753px;top:1291px;width:60px;height:32px;background:#ddd"></div>
<svg style="left:1772px;top:1297px" width="20" height="20" viewBox="0 0 20 20" fill="none" stroke="#333" stroke-width="1.300"><path d="M1 1H19V19H1ZM1 7H19M1 13H19M7 1V19M13 1V19"/></svg>
<svg style="left:1833px;top:1297px" width="20" height="20" viewBox="0 0 20 20" fill="none" stroke="#333" stroke-width="1.300"><path d="M1 1H19V19H1Z"/><path d="M5 4H15V16H5ZM7 8H13M7 11H13"/></svg>
<svg style="left:1893px;top:1297px" width="20" height="20" viewBox="0 0 20 20" fill="none" stroke="#333" stroke-width="1.300"><path d="M1 1H19V19H1ZM1 12H19M6 1V12M13 1V12"/></svg>
<div class="a" style="left:1941px;top:1306px;width:11px;height:1.500px;background:#444"></div>
<div class="a" style="left:1961px;top:1306px;width:148px;height:2px;background:#666"></div>
<div class="a" style="left:2031px;top:1298px;width:8px;height:17px;background:#666"></div>
<div class="a" style="left:2116px;top:1306px;width:13px;height:1.500px;background:#444"></div>
<div class="a" style="left:2122px;top:1300px;width:1.500px;height:13px;background:#444"></div>
<div class="t st2" style="left:2148px;top:1295px;font-size:15.500px">100%</div>
</div>
</body></html>
